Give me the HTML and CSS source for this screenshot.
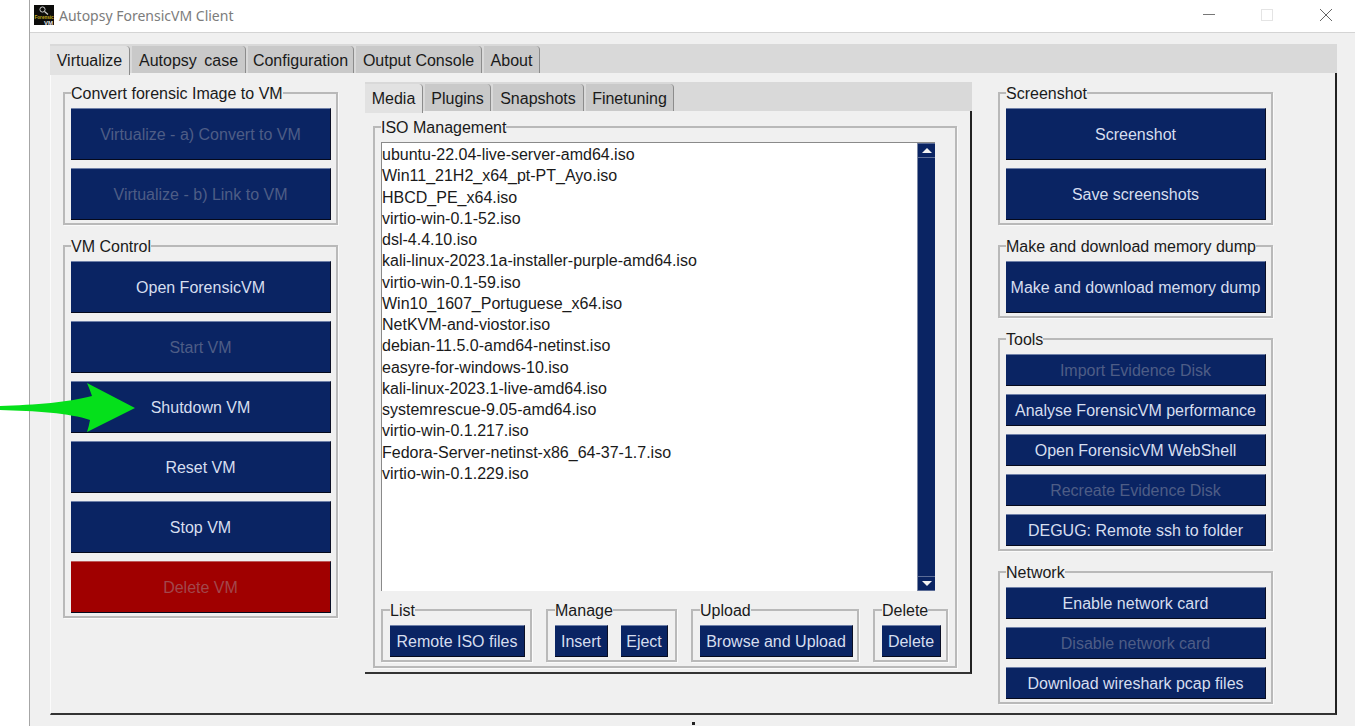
FILE: index.html
```html
<!DOCTYPE html>
<html lang="en">
<head>
    <meta charset="UTF-8">
    <meta name="viewport" content="width=device-width, initial-scale=1.0">
    <title>Autopsy ForensicVM Client</title>
    <link rel="stylesheet" href="styles.css">
</head>
<body>
    <div class="window">
        <div class="titlebar">
            <svg class="app-icon" width="20" height="20" viewBox="0 0 20 20">
                <rect width="20" height="20" fill="#0c0c0a"/>
                <circle cx="8.5" cy="4.5" r="2.6" fill="none" stroke="#cfcfcf" stroke-width="1"/>
                <line x1="10.5" y1="6.5" x2="14" y2="9.5" stroke="#cfcfcf" stroke-width="1.2"/>
                <text x="0.5" y="14" font-size="4.6" font-weight="bold" fill="#c9b020" font-family="Liberation Sans, sans-serif">Forensic</text>
                <text x="10" y="19.5" font-size="6" font-weight="bold" fill="#e8e8e8" font-family="Liberation Sans, sans-serif">VM</text>
            </svg>
            <span class="app-title">Autopsy ForensicVM Client</span>
            <div class="win-controls">
                <svg width="12" height="12" viewBox="0 0 12 12"><line x1="0" y1="5.5" x2="12" y2="5.5" stroke="#777"/></svg>
                <svg class="win-max" width="12" height="12" viewBox="0 0 12 12"><rect x="0.5" y="0.5" width="11" height="11" fill="none" stroke="#e4e4e4"/></svg>
                <svg width="12" height="12" viewBox="0 0 12 12"><path d="M0 0L12 12M12 0L0 12" stroke="#666" fill="none"/></svg>
            </div>
        </div>

        <div class="notebook">
            <div class="tabs">
                <div class="tab active">Virtualize</div>
                <div class="tab tab-autopsy">Autopsy case</div>
                <div class="tab tab-config">Configuration</div>
                <div class="tab tab-console">Output Console</div>
                <div class="tab tab-about">About</div>
            </div>
            <div class="page">
                <div class="column">
                    <fieldset class="group">
                        <legend>Convert forensic Image to VM</legend>
                        <button class="btn big off">Virtualize - a) Convert to VM</button>
                        <button class="btn big off">Virtualize - b) Link to VM</button>
                    </fieldset>
                    <fieldset class="group">
                        <legend>VM Control</legend>
                        <button class="btn big">Open ForensicVM</button>
                        <button class="btn big off">Start VM</button>
                        <button class="btn big">Shutdown VM</button>
                        <button class="btn big">Reset VM</button>
                        <button class="btn big">Stop VM</button>
                        <button class="btn big off danger">Delete VM</button>
                    </fieldset>
                </div>

                <div class="inner-notebook">
                    <div class="tabs inner-tabs">
                        <div class="tab active tab-media">Media</div>
                        <div class="tab tab-plugins">Plugins</div>
                        <div class="tab tab-snapshots">Snapshots</div>
                        <div class="tab tab-finetuning">Finetuning</div>
                    </div>
                    <div class="inner-page">
                        <fieldset class="group iso-group">
                            <legend>ISO Management</legend>
                            <div class="listbox">
                                <ul class="iso-list">
                                    <li>ubuntu-22.04-live-server-amd64.iso</li>
                                    <li>Win11_21H2_x64_pt-PT_Ayo.iso</li>
                                    <li>HBCD_PE_x64.iso</li>
                                    <li>virtio-win-0.1-52.iso</li>
                                    <li>dsl-4.4.10.iso</li>
                                    <li>kali-linux-2023.1a-installer-purple-amd64.iso</li>
                                    <li>virtio-win-0.1-59.iso</li>
                                    <li>Win10_1607_Portuguese_x64.iso</li>
                                    <li>NetKVM-and-viostor.iso</li>
                                    <li>debian-11.5.0-amd64-netinst.iso</li>
                                    <li>easyre-for-windows-10.iso</li>
                                    <li>kali-linux-2023.1-live-amd64.iso</li>
                                    <li>systemrescue-9.05-amd64.iso</li>
                                    <li>virtio-win-0.1.217.iso</li>
                                    <li>Fedora-Server-netinst-x86_64-37-1.7.iso</li>
                                    <li>virtio-win-0.1.229.iso</li>
                                </ul>
                                <div class="scrollbar">
                                    <div class="scroll-btn"><span class="arrow-up"></span></div>
                                    <div class="scroll-btn"><span class="arrow-down"></span></div>
                                </div>
                            </div>
                            <div class="iso-actions">
                                <fieldset class="group small list-group">
                                    <legend>List</legend>
                                    <button class="btn w-remote">Remote ISO files</button>
                                </fieldset>
                                <fieldset class="group small manage-group">
                                    <legend>Manage</legend>
                                    <div class="btn-row">
                                        <button class="btn w-insert">Insert</button>
                                        <button class="btn w-eject">Eject</button>
                                    </div>
                                </fieldset>
                                <fieldset class="group small upload-group">
                                    <legend>Upload</legend>
                                    <button class="btn w-upload">Browse and Upload</button>
                                </fieldset>
                                <fieldset class="group small delete-group">
                                    <legend>Delete</legend>
                                    <button class="btn w-delete">Delete</button>
                                </fieldset>
                            </div>
                        </fieldset>
                    </div>
                </div>

                <div class="column">
                    <fieldset class="group">
                        <legend>Screenshot</legend>
                        <button class="btn big">Screenshot</button>
                        <button class="btn big">Save screenshots</button>
                    </fieldset>
                    <fieldset class="group">
                        <legend>Make and download memory dump</legend>
                        <button class="btn big">Make and download memory dump</button>
                    </fieldset>
                    <fieldset class="group">
                        <legend>Tools</legend>
                        <button class="btn mid off">Import Evidence Disk</button>
                        <button class="btn mid">Analyse ForensicVM performance</button>
                        <button class="btn mid">Open ForensicVM WebShell</button>
                        <button class="btn mid off">Recreate Evidence Disk</button>
                        <button class="btn mid">DEGUG: Remote ssh to folder</button>
                    </fieldset>
                    <fieldset class="group">
                        <legend>Network</legend>
                        <button class="btn mid">Enable network card</button>
                        <button class="btn mid off">Disable network card</button>
                        <button class="btn mid">Download wireshark pcap files</button>
                    </fieldset>
                </div>
            </div>
        </div>
    </div>

    <svg class="green-arrow" width="136" height="54" viewBox="0 382 136 54">
        <path d="M0 406 C35 405 70 402 92 396 Q90 390 87 383 L135 408 L87 432 Q89 426 90 420 C70 413 35 411 0 410 Z" fill="#05e01b"/>
    </svg>
    <span class="cursor-tip"></span>
</body>
</html>
```

FILE: styles.css
```css
* {
    box-sizing: border-box;
}
html, body {
    height: 726px;
    overflow: hidden;
}
body {
    margin: 0;
    background: #fff;
    font-family: "Liberation Sans", Arial, sans-serif;
    font-size: 16px;
    color: #1a1a1a;
}
.window {
    margin-left: 29px;
    height: 726px;
    border-left: 1px solid #a6a6a6;
    background: #f0f0f0;
}
.titlebar {
    display: flex;
    align-items: center;
    height: 33px;
    padding: 0 23px 2px 4px;
    background: #fff;
    border-bottom: 1px solid #d4d4d4;
}
.app-title {
    margin-left: 5px;
    font-family: "Noto Sans", sans-serif;
    font-size: 14px;
    color: #7c7c7c;
}
.win-controls {
    display: flex;
    gap: 46px;
    margin-left: auto;
}
.win-max {
    margin-right: 1px;
}
.notebook {
    width: 1287px;
    margin: 11px 0 0 20px;
}
.tabs {
    display: flex;
    gap: 2px;
    height: 29px;
    background: #d9d9d9;
}
.tab {
    height: 27px;
    margin-top: 2px;
    line-height: 29px;
    text-align: center;
    background: #c9c9c9;
    border-right: 1px solid #8c8c8c;
    border-top-right-radius: 4px;
}
.tab.active {
    height: 29px;
    width: 80px;
    background: #e2e2e2;
}
.tab-autopsy { width: 114px; word-spacing: 3px; }
.tab-config { width: 106px; }
.tab-console { width: 126px; }
.tab-about { width: 56px; }
.tab-media.active { width: 58px; }
.tab-plugins { width: 66px; }
.tab-snapshots { width: 91px; }
.tab-finetuning { width: 88px; }

.page {
    display: flex;
    align-items: flex-start;
    gap: 26px;
    height: 642px;
    padding: 8px 0 0 12px;
    border-left: 1px solid #fbfbfb;
    border-right: 2px solid #222;
    border-bottom: 2px solid #333;
}
.column {
    display: flex;
    flex-direction: column;
    gap: 9px;
    width: 275px;
}
.group {
    min-width: 0;
    margin: 0;
    padding: 4px 5px 3px 6px;
    border: 2px solid #b9b9b9;
    box-shadow: 1px 1px 0 #fafafa;
}
.group legend {
    padding: 3px 0 0;
    line-height: 20px;
}
.btn {
    display: block;
    margin: 0;
    padding: 2px 0 0;
    width: 100%;
    font-family: inherit;
    font-size: 16px;
    color: #d6deef;
    background: #0a2463;
    border: none;
    border-top: 1px solid #6f80a8;
    border-right: 1px solid #0a0f25;
    border-bottom: 1px solid #05091c;
    cursor: pointer;
    white-space: nowrap;
}
.btn.big {
    height: 52px;
}
.btn.mid {
    height: 32px;
}
.btn.big + .btn.big,
.btn.mid + .btn.mid {
    margin-top: 8px;
}
.btn.off {
    color: #4e5d86;
}
.btn.danger {
    color: #a2474c;
    background: #a00000;
    border-top-color: #bd5a5a;
}

.inner-notebook {
    width: 607px;
    margin: 1px 0 0 1px;
}
.inner-tabs {
    height: 29px;
}
.inner-page {
    height: 563px;
    padding: 4px 0 0 8px;
    border-right: 2px solid #222;
    border-bottom: 2px solid #333;
}
.iso-group {
    width: 584px;
    height: 553px;
    padding: 4px 7px 4px 6px;
}
.listbox {
    display: flex;
    justify-content: space-between;
    width: 554px;
    height: 449px;
    background: #fff;
    border-top: 1px solid #8a8a8a;
    border-left: 1px solid #8a8a8a;
}
.iso-list {
    margin: 0;
    padding: 1px 0 0;
    list-style: none;
}
.iso-list li {
    height: 21.27px;
    line-height: 21.27px;
    white-space: nowrap;
}
.scrollbar {
    display: flex;
    flex-direction: column;
    justify-content: space-between;
    width: 18px;
    height: 448px;
    background: #0a2463;
    border-left: 1px solid #7c88a4;
}
.scroll-btn {
    display: flex;
    align-items: center;
    justify-content: center;
    height: 15px;
    border-top: 1px solid #5b6c96;
    border-bottom: 1px solid #5b6c96;
}
.arrow-up, .arrow-down {
    width: 0;
    height: 0;
    border-left: 5px solid transparent;
    border-right: 5px solid transparent;
}
.arrow-up {
    border-bottom: 5px solid #f2f2f2;
}
.arrow-down {
    border-top: 5px solid #f2f2f2;
}
.iso-actions {
    display: flex;
    gap: 14px;
    margin-top: 7px;
}
.small {
    padding: 4px 5px 3px 7px;
}
.small .btn {
    height: 32px;
}
.list-group { width: 151px; }
.manage-group { width: 131px; }
.upload-group { width: 168px; }
.delete-group { width: 75px; }
.btn-row {
    display: flex;
    gap: 13px;
}
.small .w-remote { width: 135px; }
.small .w-insert { width: 53px; }
.small .w-eject { width: 47px; }
.small .w-upload { width: 153px; }
.small .w-delete { width: 59px; }

.green-arrow {
    position: absolute;
    left: 0;
    top: 382px;
}
.cursor-tip {
    position: absolute;
    left: 692px;
    top: 722px;
    width: 3px;
    height: 3px;
    background: #222;
}
```
